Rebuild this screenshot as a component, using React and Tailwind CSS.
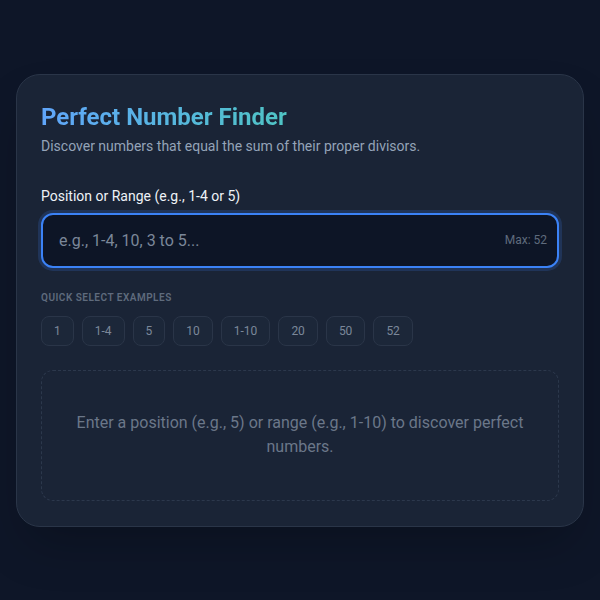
import React, { useState } from "react";

const EXAMPLES = ["1", "1-4", "5", "10", "1-10", "20", "50", "52"];

function App() {
  const [query, setQuery] = useState("");

  return (
    <div
      className="min-h-screen bg-[#0e1628] flex items-center justify-center px-4"
      style={{ fontFamily: "Roboto, 'Liberation Sans', sans-serif" }}
    >
      <div className="w-full bg-[#1a2436] border border-[#2a3548] rounded-3xl px-6 pt-[26px] pb-[25px] shadow-2xl">
        <h1 className="inline-block text-2xl font-bold leading-8 bg-gradient-to-r from-[#60a5fa] to-[#4fc4c4] bg-clip-text text-transparent">
          Perfect Number Finder
        </h1>
        <p className="mt-[3px] text-sm text-[#94a3b8]">
          Discover numbers that equal the sum of their proper divisors.
        </p>

        <label className="block mt-[30px] mb-[7px] text-sm font-normal text-[#eef2f7]">
          Position or Range (e.g., 1-4 or 5)
        </label>
        <div className="relative">
          <input
            value={query}
            onChange={(e) => setQuery(e.target.value)}
            placeholder="e.g., 1-4, 10, 3 to 5..."
            className="w-full h-[55px] bg-[#0d1526] border-2 border-[#3b82f6] rounded-xl pl-4 pr-20 text-base text-[#e2e8f0] placeholder-[#7b8799] outline-none shadow-[0_0_0_3px_rgba(59,130,246,0.18)]"
          />
          <span className="absolute right-3 top-1/2 -translate-y-1/2 text-xs text-[#5f6b7d]">
            Max: 52
          </span>
        </div>

        <p className="mt-[22px] text-[10px] leading-4 font-semibold uppercase tracking-wider text-[#5f6b7d]">
          Quick select examples
        </p>
        <div className="mt-2.5 flex flex-wrap gap-2">
          {EXAMPLES.map((ex) => (
            <button
              key={ex}
              type="button"
              onClick={() => setQuery(ex)}
              className="px-3 py-[6px] text-xs leading-4 rounded-lg bg-[#1c2739] border border-[#2a3548] text-[#7b8799]"
            >
              {ex}
            </button>
          ))}
        </div>

        <div className="mt-6 border border-dashed border-[#2c384c] rounded-xl pt-10 pb-[41px] px-8 text-center text-base leading-6 text-[#6b7789]">
          Enter a position (e.g., 5) or range (e.g., 1-10) to discover perfect numbers.
        </div>
      </div>
    </div>
  );
}

export default App;
